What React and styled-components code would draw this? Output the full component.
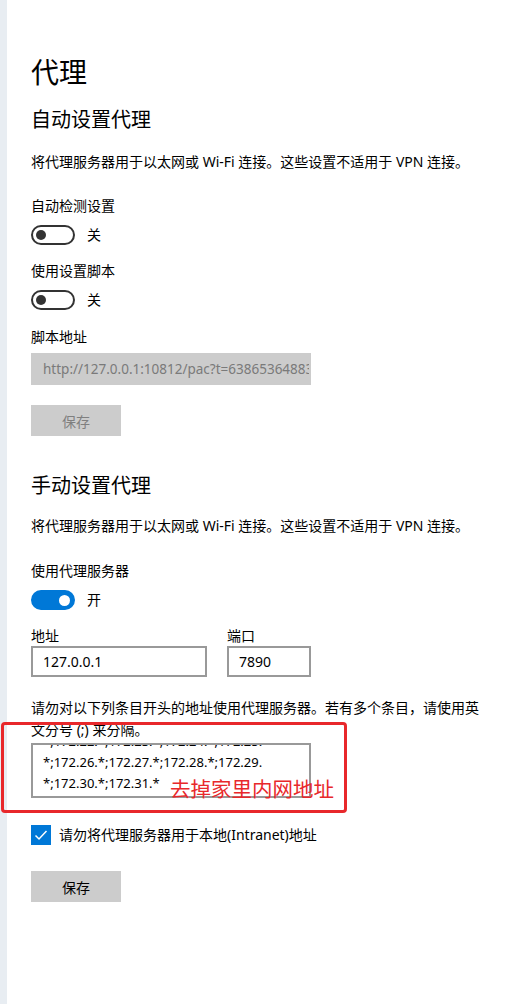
import React from "react";
import styled, { createGlobalStyle } from "styled-components";

const Global = createGlobalStyle`
  html, body { margin: 0; padding: 0; background: #ffffff; }
  body {
    font-family: "Noto Sans", "Noto Sans CJK SC", sans-serif;
    color: #000;
    -webkit-font-smoothing: antialiased;
  }
  * { box-sizing: border-box; }
`;

const Page = styled.div`
  display: flex;
  min-height: 1004px;
  width: 519px;
  position: relative;
  overflow: hidden;
`;

const Strip = styled.div`
  width: 7px;
  flex: none;
  background: #e8edf2;
`;

const Main = styled.main`
  flex: 1;
  padding: 52px 0 0 24px;
  display: flex;
  flex-direction: column;
  align-items: flex-start;
`;

const Title = styled.h1`
  margin: 0;
  font-size: 28px;
  line-height: 40px;
  font-weight: 400;
`;

const Heading = styled.h2`
  margin: ${(p) => p.$top}px 0 0;
  font-size: 20px;
  line-height: 28px;
  font-weight: 400;
`;

const Text = styled.p`
  margin: ${(p) => p.$top || 0}px 0 0;
  font-size: 14px;
  line-height: ${(p) => p.$lh || 20}px;
  width: ${(p) => (p.$w ? p.$w + "px" : "auto")};
`;

const ToggleRow = styled.div`
  margin-top: 9px;
  display: flex;
  align-items: center;
  gap: 12px;
  font-size: 14px;
  line-height: 20px;
`;

const Track = styled.span`
  width: 44px;
  height: 20px;
  border-radius: 10px;
  border: 2px solid ${(p) => (p.$on ? "#0078d7" : "#333")};
  background: ${(p) => (p.$on ? "#0078d7" : "transparent")};
  display: flex;
  align-items: center;
  justify-content: ${(p) => (p.$on ? "flex-end" : "flex-start")};
  padding: 0 3px;
`;

const Knob = styled.span`
  width: ${(p) => (p.$on ? 11 : 10)}px;
  height: ${(p) => (p.$on ? 11 : 10)}px;
  border-radius: 50%;
  background: ${(p) => (p.$on ? "#fff" : "#333")};
`;

const Field = styled.div`
  margin-top: ${(p) => p.$top || 0}px;
  width: ${(p) => p.$w}px;
  height: ${(p) => p.$h || 31}px;
  padding: 0 10px;
  display: flex;
  align-items: center;
  font-size: ${(p) => p.$fs || 14}px;
  white-space: nowrap;
  overflow: hidden;
  background: ${(p) => (p.$disabled ? "#cccccc" : "#fff")};
  color: ${(p) => (p.$disabled ? "#7a7a7a" : "#000")};
  border: 2px solid ${(p) => (p.$disabled ? "#cccccc" : "#999")};
`;

const Button = styled.div`
  margin-top: ${(p) => p.$top}px;
  width: 90px;
  height: 31px;
  background: #cccccc;
  color: ${(p) => (p.$disabled ? "#7f7f7f" : "#000")};
  font-size: 14px;
  display: flex;
  align-items: center;
  justify-content: center;
`;

const Pair = styled.div`
  margin-top: 16px;
  display: flex;
  gap: 20px;
`;

const Col = styled.div`
  display: flex;
  flex-direction: column;
`;

const Label = styled.div`
  font-size: 14px;
  line-height: 20px;
`;

const Area = styled.div`
  margin-top: 2px;
  width: 280px;
  height: 55px;
  border: 2px solid #999;
  padding: 0 10px 2px;
  display: flex;
  flex-direction: column;
  justify-content: flex-end;
  overflow: hidden;
  font-size: 13px;
  line-height: 21px;
  white-space: nowrap;
`;

const CheckRow = styled.div`
  margin-top: 27px;
  display: flex;
  align-items: center;
  gap: 8px;
  font-size: 14px;
  line-height: 20px;
`;

const Box = styled.span`
  width: 20px;
  height: 20px;
  background: #0078d7;
  display: flex;
  align-items: center;
  justify-content: center;
`;

const Annotation = styled.div`
  position: absolute;
  left: 1px;
  top: 722px;
  width: 346px;
  height: 91px;
  border: 3px solid #e8282b;
  border-radius: 4px;
  pointer-events: none;
`;

const Note = styled.span`
  position: absolute;
  left: 166px;
  top: 49px;
  font-size: 20.5px;
  line-height: 28px;
  color: #e8282b;
  font-family: "Noto Sans CJK SC", sans-serif;
  white-space: nowrap;
`;

function Toggle({ on, label }) {
  return (
    <ToggleRow>
      <Track $on={on}>
        <Knob $on={on} />
      </Track>
      <span>{label}</span>
    </ToggleRow>
  );
}

export default function App() {
  return (
    <>
      <Global />
      <Page>
        <Strip />
        <Main>
          <Title>代理</Title>
          <Heading $top={14}>自动设置代理</Heading>
          <Text $top={18}>将代理服务器用于以太网或 Wi-Fi 连接。这些设置不适用于 VPN 连接。</Text>
          <Text $top={24}>自动检测设置</Text>
          <Toggle on={false} label="关" />
          <Text $top={16}>使用设置脚本</Text>
          <Toggle on={false} label="关" />
          <Text $top={17}>脚本地址</Text>
          <Field $top={6} $w={280} $h={32} $fs={13.5} $disabled>
            http://127.0.0.1:10812/pac?t=638653648833
          </Field>
          <Button $top={20} $disabled>保存</Button>

          <Heading $top={36}>手动设置代理</Heading>
          <Text $top={16}>将代理服务器用于以太网或 Wi-Fi 连接。这些设置不适用于 VPN 连接。</Text>
          <Text $top={25}>使用代理服务器</Text>
          <Toggle on={true} label="开" />
          <Pair>
            <Col>
              <Label>地址</Label>
              <Field $w={176}>127.0.0.1</Field>
            </Col>
            <Col>
              <Label>端口</Label>
              <Field $w={84}>7890</Field>
            </Col>
          </Pair>
          <Text $top={20} $lh={22} $w={455}>
            请勿对以下列条目开头的地址使用代理服务器。若有多个条目，请使用英文分号 (;) 来分隔。
          </Text>
          <Area>
            <div>*;172.22.*;172.23.*;172.24.*;172.25.</div>
            <div>*;172.26.*;172.27.*;172.28.*;172.29.</div>
            <div>*;172.30.*;172.31.*</div>
          </Area>
          <CheckRow>
            <Box>
              <svg width="14" height="14" viewBox="0 0 14 14" fill="none">
                <polyline points="1.5,7.5 5,11 12.5,3" stroke="#fff" strokeWidth="1.5" />
              </svg>
            </Box>
            <span>请勿将代理服务器用于本地(Intranet)地址</span>
          </CheckRow>
          <Button $top={26}>保存</Button>
        </Main>
        <Annotation>
          <Note>去掉家里内网地址</Note>
        </Annotation>
      </Page>
    </>
  );
}
